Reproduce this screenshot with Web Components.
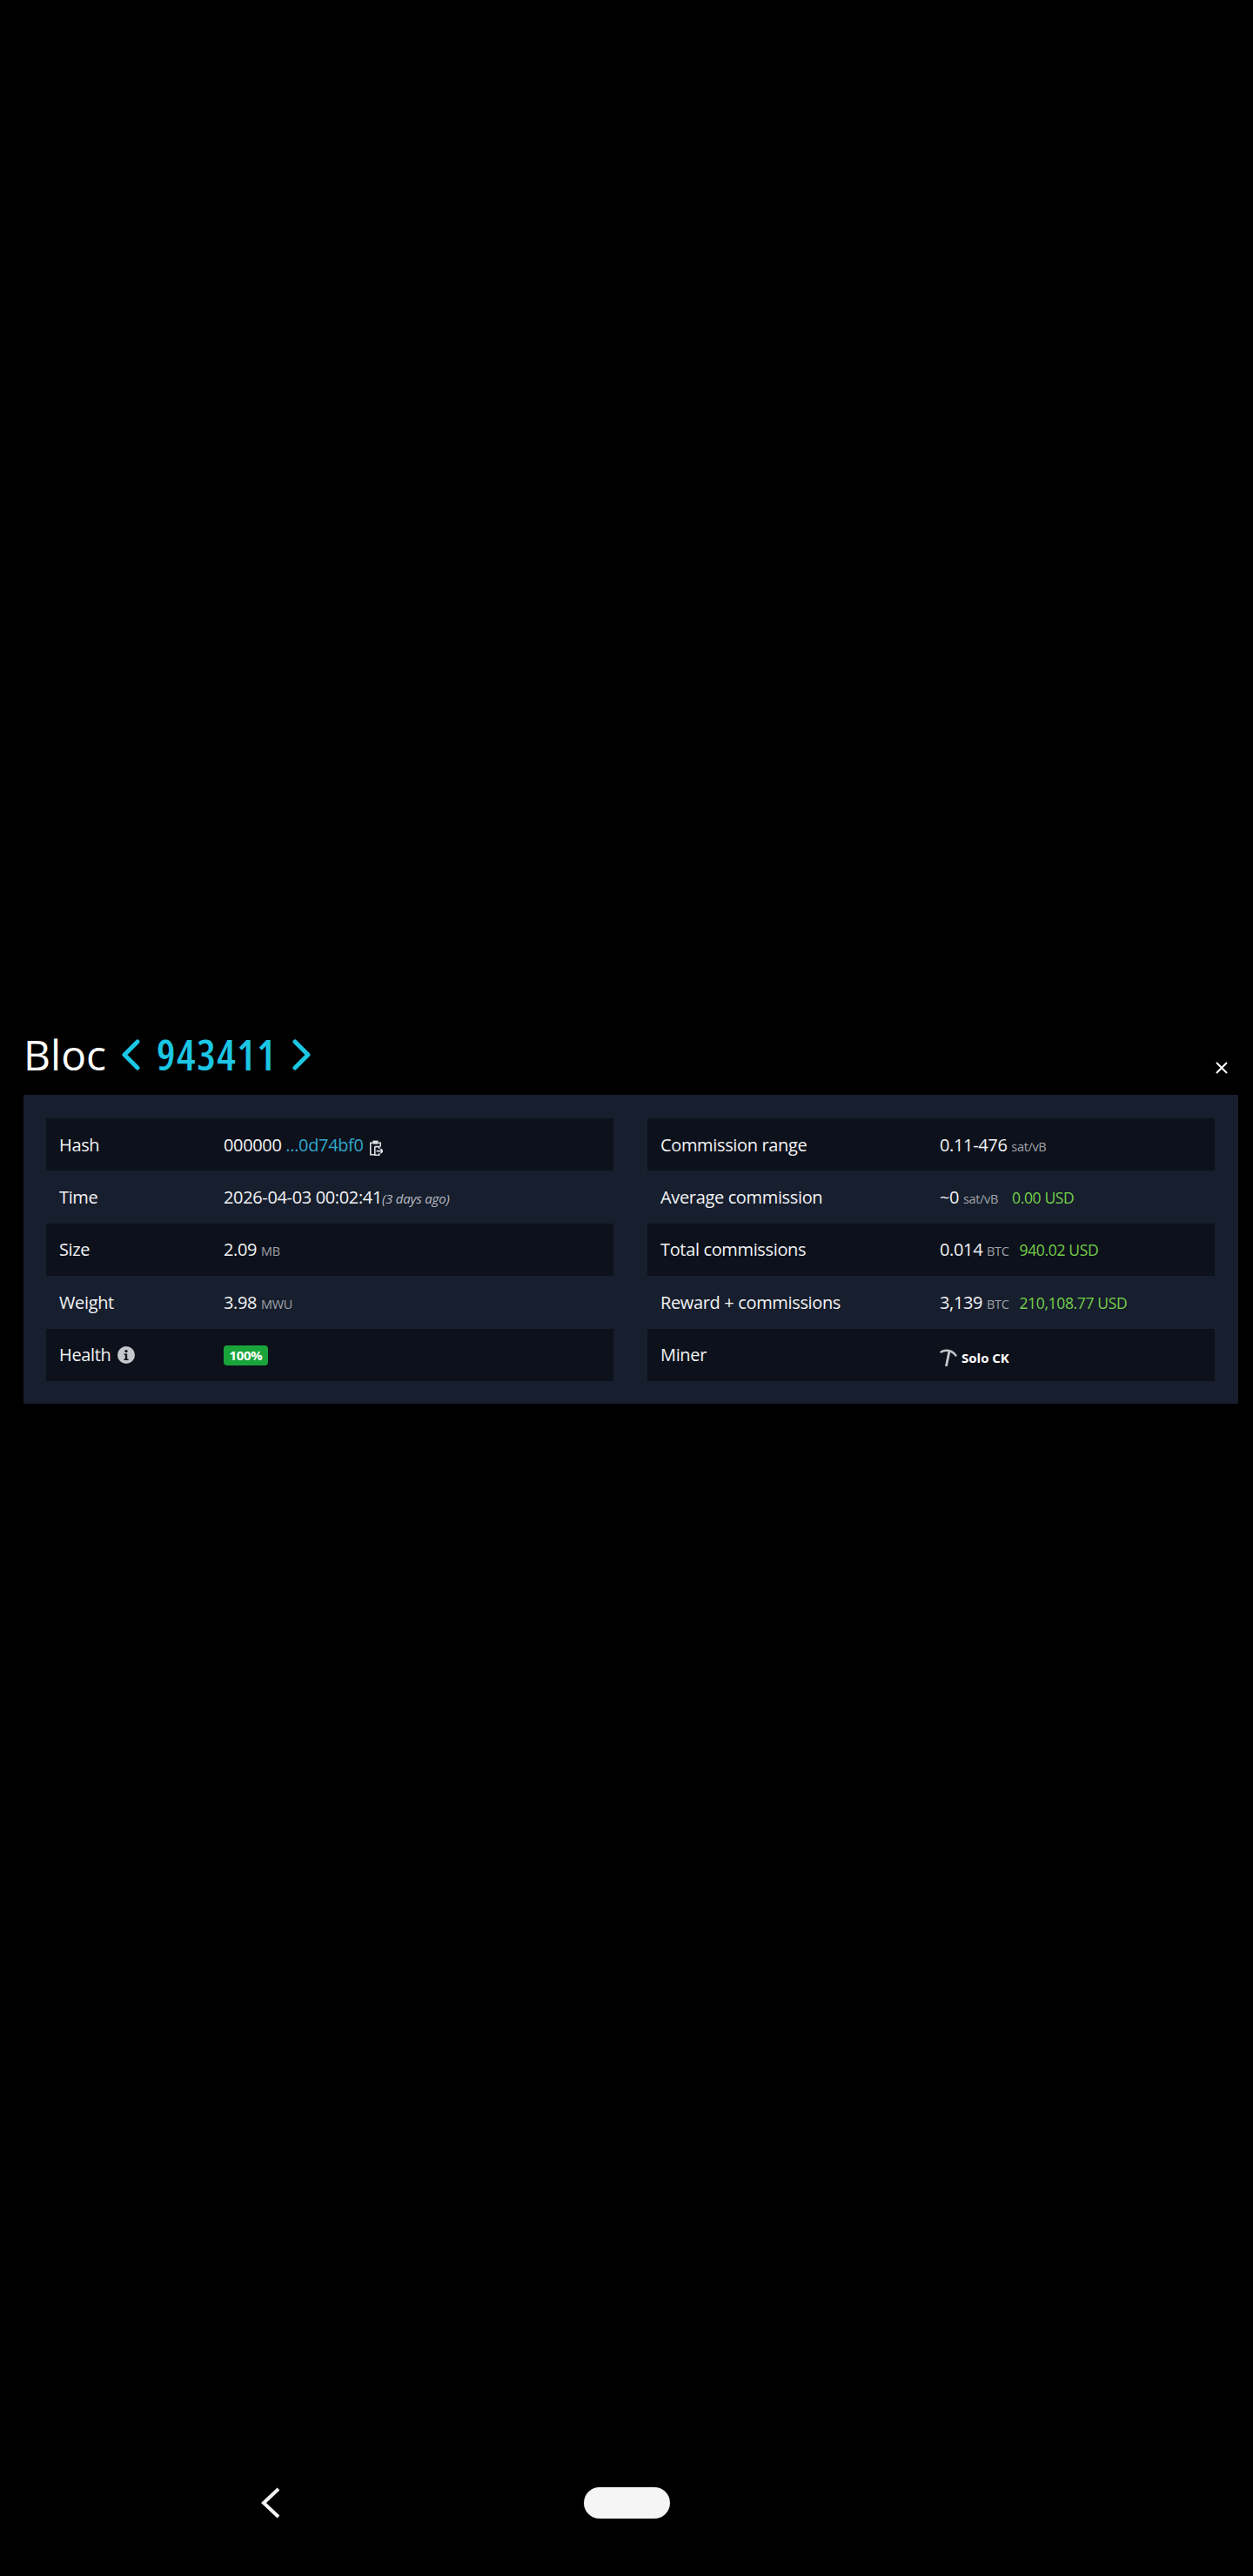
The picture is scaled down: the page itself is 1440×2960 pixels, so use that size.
<!DOCTYPE html>
<html lang="en">
<head>
<meta charset="utf-8">
<title>Bloc 943411</title>
<style>
  html, body { margin: 0; background: #000; }
  body {
    height: 2960px;
    display: flex;
    flex-direction: column;
    overflow: hidden;
    color: #fff;
    font-family: "Open Sans", "Noto Sans", sans-serif;
  }
</style>
</head>
<body>
  <block-modal>
    <block-title slot="title" height="943411"></block-title>
    <stats-table style="--label-w:189px">
      <stats-row>
        <span slot="label">Hash</span>
        <span>000000 <hash-link>...0d74bf0</hash-link><copy-icon></copy-icon></span>
      </stats-row>
      <stats-row>
        <span slot="label">Time</span>
        <span>2026-04-03 00:02:41<time-ago>(3 days ago)</time-ago></span>
      </stats-row>
      <stats-row>
        <span slot="label">Size</span>
        <span>2.09 <unit-label>MB</unit-label></span>
      </stats-row>
      <stats-row>
        <span slot="label">Weight</span>
        <span>3.98 <unit-label>MWU</unit-label></span>
      </stats-row>
      <stats-row>
        <span slot="label">Health<info-icon></info-icon></span>
        <health-badge>100%</health-badge>
      </stats-row>
    </stats-table>
    <stats-table style="--label-w:321px">
      <stats-row>
        <span slot="label">Commission range</span>
        <span>0.11-476 <unit-label>sat/vB</unit-label></span>
      </stats-row>
      <stats-row>
        <span slot="label">Average commission</span>
        <span>~0 <unit-label>sat/vB</unit-label><fiat-value style="margin-left:16px">0.00 USD</fiat-value></span>
      </stats-row>
      <stats-row>
        <span slot="label">Total commissions</span>
        <span>0.014 <unit-label>BTC</unit-label><fiat-value>940.02 USD</fiat-value></span>
      </stats-row>
      <stats-row>
        <span slot="label">Reward + commissions</span>
        <span>3,139 <unit-label>BTC</unit-label><fiat-value>210,108.77 USD</fiat-value></span>
      </stats-row>
      <stats-row>
        <span slot="label">Miner</span>
        <miner-tag>Solo CK</miner-tag>
      </stats-row>
    </stats-table>
  </block-modal>
  <nav-bar></nav-bar>

<script>
  // small helper so each class only has to give its html
  class ShadowEl extends HTMLElement {
    constructor() {
      super();
      this.attachShadow({ mode: "open" });
    }
    connectedCallback() {
      this.shadowRoot.innerHTML = this.getTemplate();
    }
  }

  class BlockModal extends ShadowEl {
    getTemplate() {
      return `
        <style>
          :host { display: block; padding: 1182px 17px 0 27px; }
          .head { display: flex; justify-content: space-between; height: 76px; }
          .close {
            width: 16px; height: 16px; margin: 37px 11px 0 0;
            stroke: #fff; stroke-width: 2; fill: none;
          }
          .panel {
            display: flex; gap: 39px;
            background: #171e2d;
            padding: 27px 27px 26px 26px;
          }
          ::slotted(stats-table) { flex: 1 1 0; min-width: 0; }
        </style>
        <div class="head">
          <slot name="title"></slot>
          <svg class="close" viewBox="0 0 16 16"><path d="M2 2l12 12M14 2L2 14"/></svg>
        </div>
        <div class="panel"><slot></slot></div>
      `;
    }
  }

  class BlockTitle extends ShadowEl {
    getTemplate() {
      const h = this.getAttribute("height");
      return `
        <style>
          :host { display: flex; align-items: center; height: 60px; font-size: 48px; font-weight: 500; line-height: 60px; color: #fff; }
          .bloc { margin-right: 18px; }
          .num { color: #1bc6e4; font-stretch: 75%; font-weight: 600; letter-spacing: 1.6px; margin: 0 18px 0 19px; }
          svg { width: 21px; height: 36px; stroke: #1bc6e4; stroke-width: 5; fill: none; stroke-linecap: round; stroke-linejoin: round; }
        </style>
        <span class="bloc">Bloc</span>
        <svg viewBox="0 0 21 36"><path d="M18 3L3 18l15 15"/></svg>
        <span class="num">${h}</span>
        <svg viewBox="0 0 21 36"><path d="M3 3l15 15L3 33"/></svg>
      `;
    }
  }

  class StatsTable extends ShadowEl {
    getTemplate() {
      return `
        <style>:host { display: block; }</style>
        <slot></slot>
      `;
    }
  }

  class StatsRow extends ShadowEl {
    getTemplate() {
      return `
        <style>
          :host {
            display: grid;
            grid-template-columns: var(--label-w) 1fr;
            align-items: center;
            height: 60.4px;
            padding-left: 15px;
            font-size: 20px;
            letter-spacing: -0.35px;
            color: #f2f3f5;
          }
          :host(:nth-child(odd)) { background: #0d111b; }
          .val { display: flex; align-items: center; }
        </style>
        <slot name="label"></slot>
        <div class="val"><slot></slot></div>
      `;
    }
  }

  class HashLink extends ShadowEl {
    getTemplate() { return `<style>:host { color: #2fa6cb; }</style><slot></slot>`; }
  }

  class UnitLabel extends ShadowEl {
    getTemplate() { return `<style>:host { color: #a0a3aa; font-size: 14.5px; }</style><slot></slot>`; }
  }

  class TimeAgo extends ShadowEl {
    getTemplate() { return `<style>:host { color: #b9bcc3; font-size: 15px; font-style: italic; letter-spacing: -0.2px; }</style><slot></slot>`; }
  }

  class FiatValue extends ShadowEl {
    getTemplate() { return `<style>:host { color: #74d04a; font-size: 17.5px; margin-left: 12px; }</style><slot></slot>`; }
  }

  class HealthBadge extends ShadowEl {
    getTemplate() {
      return `
        <style>
          :host {
            display: block;
            width: 51px; height: 23px; margin-top: 1px;
            line-height: 23px; text-align: center;
            background: #1aa53a; border-radius: 4px;
            color: #fff; font-size: 15px; font-weight: 700;
          }
        </style>
        <slot></slot>
      `;
    }
  }

  class InfoIcon extends ShadowEl {
    getTemplate() {
      return `
        <style>:host { display: inline-block; width: 20px; height: 20px; margin-left: 8px; vertical-align: -3px; }</style>
        <svg viewBox="0 0 20 20" width="20" height="20">
          <circle cx="10" cy="10" r="10" fill="#c6c8cd"/>
          <circle cx="10" cy="5.6" r="1.7" fill="#14171f"/>
          <path d="M7.6 8.4h3.6v6h1.4v1.6H7.4v-1.6h1.4V10H7.6z" fill="#14171f"/>
        </svg>
      `;
    }
  }

  class CopyIcon extends ShadowEl {
    getTemplate() {
      return `
        <style>:host { display: inline-block; width: 15px; height: 18px; margin-left: 7px; vertical-align: -5px; }</style>
        <svg viewBox="0 0 15 18" width="15" height="18" fill="none" stroke="#dfe0e4" stroke-width="1.6">
          <path d="M3.6 3.2H.8v13.6h4.6M9.4 3.2h2.8v4.4"/>
          <rect x="3.4" y="0.6" width="6.2" height="4" fill="#dfe0e4" stroke="none"/>
          <path d="M5.8 7.6h5v2.4M5.8 7.6v9.6h5v-2"/>
          <path d="M7.6 12.6H15M12.4 10l2.6 2.6-2.6 2.6"/>
        </svg>
      `;
    }
  }

  class MinerTag extends ShadowEl {
    getTemplate() {
      return `
        <style>
          :host { display: flex; align-items: center; gap: 5px; margin-top: 6px; color: #fff; font-size: 15px; font-weight: 700; letter-spacing: 0; }
          svg { width: 20px; height: 20px; }
        </style>
        <svg viewBox="0 0 20 20" fill="none" stroke="#c4c6cb" stroke-linecap="round">
          <path d="M1.5 3.6C6 .6 14 1 18.5 7.6" stroke-width="2.4"/>
          <path d="M11 2.6L7.6 19" stroke-width="2.8"/>
        </svg>
        <slot></slot>
      `;
    }
  }

  class NavBar extends ShadowEl {
    getTemplate() {
      return `
        <style>
          :host {
            display: flex; align-items: center; justify-content: center;
            position: relative;
            margin-top: auto;
            height: 36px; padding-bottom: 66px;
          }
          .pill { width: 99px; height: 36px; border-radius: 18px; background: #f5f5f5; }
          svg { position: absolute; left: 300px; top: 0; width: 22px; height: 36px; stroke: #f5f5f5; stroke-width: 4; fill: none; }
        </style>
        <svg viewBox="0 0 22 36"><path d="M20 2L3 18l17 16"/></svg>
        <div class="pill"></div>
      `;
    }
  }

  customElements.define("block-modal", BlockModal);
  customElements.define("block-title", BlockTitle);
  customElements.define("stats-table", StatsTable);
  customElements.define("stats-row", StatsRow);
  customElements.define("hash-link", HashLink);
  customElements.define("unit-label", UnitLabel);
  customElements.define("time-ago", TimeAgo);
  customElements.define("fiat-value", FiatValue);
  customElements.define("health-badge", HealthBadge);
  customElements.define("info-icon", InfoIcon);
  customElements.define("copy-icon", CopyIcon);
  customElements.define("miner-tag", MinerTag);
  customElements.define("nav-bar", NavBar);
</script>
</body>
</html>
